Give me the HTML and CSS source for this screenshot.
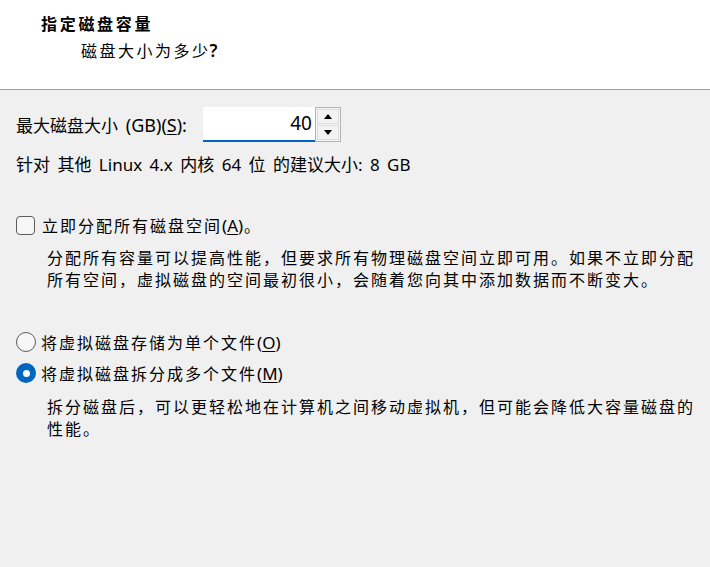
FILE: index.html
```html
<!DOCTYPE html>
<html lang="zh-CN">
<head>
<meta charset="utf-8">
<title>指定磁盘容量</title>
<link rel="stylesheet" href="styles.css">
</head>
<body>
<header class="header">
  <div class="title">指定磁盘容量</div>
  <div class="subtitle">磁盘大小为多少<span class="lat q">?</span></div>
</header>
<main class="content">
  <div class="size-row">
    <label class="size-label">最大磁盘大小 <span class="lat wide">(GB)(<u>S</u>):</span></label>
    <div class="spin">
      <div class="spin-input">40</div>
      <div class="spin-buttons">
        <div class="spin-btn"><span class="arrow-up"></span></div>
        <div class="spin-btn"><span class="arrow-down"></span></div>
      </div>
    </div>
  </div>
  <div class="hint">针对 其他 Linux 4.x 内核 64 位 的建议大小: 8 GB</div>

  <div class="option check-row">
    <span class="checkbox"></span>
    <span class="opt-label">立即分配所有磁盘空间<span class="lat">(<u>A</u>)</span>。</span>
  </div>
  <p class="desc">分配所有容量可以提高性能，但要求所有物理磁盘空间立即可用。如果不立即分配所有空间，虚拟磁盘的空间最初很小，会随着您向其中添加数据而不断变大。</p>

  <div class="option radio-row first">
    <span class="radio"></span>
    <span class="opt-label">将虚拟磁盘存储为单个文件<span class="lat">(<u>O</u>)</span></span>
  </div>
  <div class="option radio-row">
    <span class="radio checked"></span>
    <span class="opt-label">将虚拟磁盘拆分成多个文件<span class="lat">(<u>M</u>)</span></span>
  </div>
  <p class="desc second">拆分磁盘后，可以更轻松地在计算机之间移动虚拟机，但可能会降低大容量磁盘的性能。</p>
</main>
</body>
</html>
```

FILE: styles.css
```css
* { box-sizing: border-box; }

html, body {
  margin: 0;
  padding: 0;
}

body {
  width: 710px;
  height: 567px;
  background: #f0f0f0;
  color: #000;
  font-family: "Noto Sans CJK SC", "Noto Sans", sans-serif;
  overflow: hidden;
}

.lat {
  font-family: "Noto Sans", "Noto Sans CJK SC", sans-serif;
  letter-spacing: 0;
}

.header {
  height: 90px;
  background: #fff;
  border-bottom: 1px solid #a0a0a0;
  padding-top: 12px;
}

.title {
  padding-left: 41px;
  font-size: 16px;
  font-weight: 700;
  line-height: 22px;
  letter-spacing: 2.7px;
}

.subtitle {
  margin-top: 5px;
  padding-left: 81px;
  font-size: 16px;
  line-height: 22px;
  letter-spacing: 2.5px;
}

.subtitle .q {
  font-size: 17px;
  font-weight: 600;
  margin-left: -1px;
}

.content {
  padding-left: 16px;
}

.size-row {
  display: flex;
  align-items: center;
  margin-top: 17px;
  height: 35px;
}

.size-label {
  width: 187px;
  font-size: 17px;
  line-height: 22px;
  word-spacing: 4px;
}

.size-label .wide {
  font-size: 18px;
}

.spin {
  display: flex;
  height: 35px;
}

.spin-input {
  width: 112px;
  height: 35px;
  background: #fff;
  border-bottom: 2px solid #0067c0;
  text-align: right;
  padding-right: 3px;
  font-family: "Noto Sans", sans-serif;
  font-size: 19px;
  line-height: 33px;
}

.spin-buttons {
  width: 26px;
  height: 35px;
  border: 1px solid #b4b4b4;
  background: #f5f5f5;
  display: flex;
  flex-direction: column;
  gap: 1px;
  padding: 1px;
}

.spin-btn {
  flex: 1;
  border: 1px solid #dcdcdc;
  background: #f3f3f3;
  display: flex;
  align-items: center;
  justify-content: center;
}

.arrow-up, .arrow-down {
  width: 0;
  height: 0;
  border-left: 4.5px solid transparent;
  border-right: 4.5px solid transparent;
}

.arrow-up { border-bottom: 5px solid #000; }
.arrow-down { border-top: 5px solid #000; }

.hint {
  margin-top: 12px;
  font-family: "Noto Sans", "Noto Sans CJK SC", sans-serif;
  font-size: 17px;
  line-height: 22px;
  word-spacing: 3px;
}

.option {
  display: flex;
  align-items: center;
  height: 20px;
}

.check-row { margin-top: 39px; }
.radio-row.first { margin-top: 42px; }
.radio-row { margin-top: 11px; }

.opt-label {
  font-size: 16px;
  line-height: 20px;
  letter-spacing: 2px;
}

.opt-label .lat {
  font-size: 17px;
  margin-right: 1px;
}

.opt-label u, .size-label u {
  text-decoration-thickness: 1px;
  text-underline-offset: 2px;
}

.checkbox {
  width: 19px;
  height: 19px;
  border: 1px solid #5a5a5a;
  border-radius: 4px;
  background: #f7f7f7;
  margin-right: 7px;
  flex: none;
}

.radio {
  width: 20px;
  height: 20px;
  border: 1px solid #5a5a5a;
  border-radius: 50%;
  background: #f7f7f7;
  margin-right: 5px;
  flex: none;
  display: flex;
  align-items: center;
  justify-content: center;
}

.radio.checked {
  border: none;
  background: #0067c0;
}

.radio.checked::after {
  content: "";
  width: 7px;
  height: 7px;
  border-radius: 50%;
  background: #fff;
}

.desc {
  margin: 11px 0 0;
  padding-left: 31px;
  font-size: 16px;
  line-height: 22px;
  letter-spacing: 2px;
}

.desc.second { margin-top: 12px; }
```
